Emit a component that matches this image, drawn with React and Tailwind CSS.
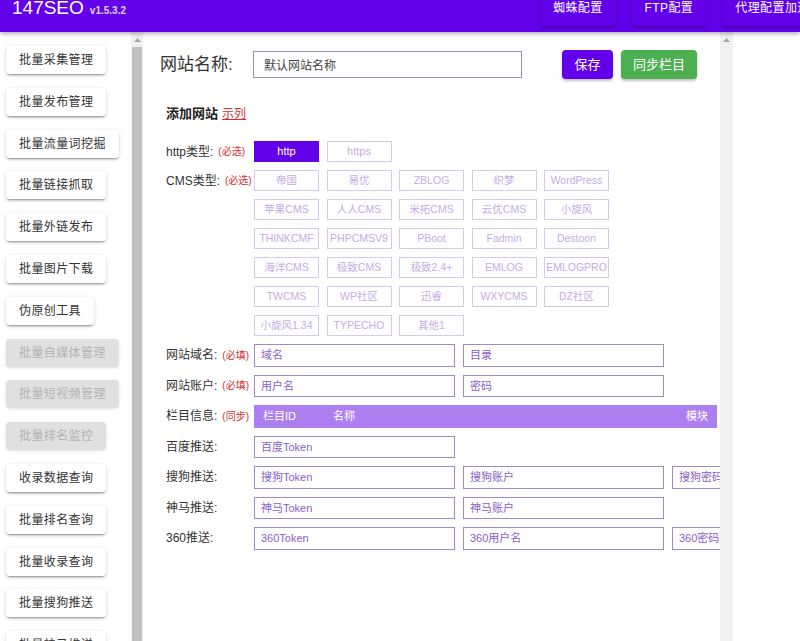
import React from 'react';

const sideItems = [
  { name: '批量采集管理' },
  { name: '批量发布管理' },
  { name: '批量流量词挖掘' },
  { name: '批量链接抓取' },
  { name: '批量外链发布' },
  { name: '批量图片下载' },
  { name: '伪原创工具' },
  { name: '批量自媒体管理', disabled: true },
  { name: '批量短视频管理', disabled: true },
  { name: '批量排名监控', disabled: true },
  { name: '收录数据查询' },
  { name: '批量排名查询' },
  { name: '批量收录查询' },
  { name: '批量搜狗推送' },
  { name: '批量神马推送' },
];

const cmsList = [
  '帝国', '易优', 'ZBLOG', '织梦', 'WordPress',
  '苹果CMS', '人人CMS', '米拓CMS', '云优CMS', '小旋风',
  'THINKCMF', 'PHPCMSV9', 'PBoot', 'Fadmin', 'Destoon',
  '海洋CMS', '极致CMS', '极致2.4+', 'EMLOG', 'EMLOGPRO',
  'TWCMS', 'WP社区', '迅睿', 'WXYCMS', 'DZ社区',
  '小旋风1.34', 'TYPECHO', '其他1',
];

const fieldRows = [
  { label: '网站域名:', tag: '(必填)', inputs: ['域名', '目录'] },
  { label: '网站账户:', tag: '(必填)', inputs: ['用户名', '密码'] },
  { label: '栏目信息:', tag: '(同步)', bar: true },
  { label: '百度推送:', inputs: ['百度Token'] },
  { label: '搜狗推送:', inputs: ['搜狗Token', '搜狗账户', '搜狗密码'] },
  { label: '神马推送:', inputs: ['神马Token', '神马账户'] },
  { label: '360推送:', inputs: ['360Token', '360用户名', '360密码'] },
];

const Arrow = () => (
  <svg width="7" height="4" viewBox="0 0 7 4">
    <polygon points="3.5,0 7,4 0,4" fill="#a3a3a3" />
  </svg>
);

const Label = ({ text, tag }) => (
  <div className="w-[88px] shrink-0 h-full flex items-center whitespace-nowrap text-[12px] text-[#333]">
    <span>{text}</span>
    {tag && <span className="ml-[5px] text-[10px] text-[#d32f2f]">{tag}</span>}
  </div>
);

const App = () => {
  return (
    <div className="w-[800px] h-[641px] overflow-hidden bg-white flex flex-col font-[family-name:Liberation_Sans,Noto_Sans_CJK_SC,sans-serif]">
      {/* header */}
      <header className="relative z-10 h-[32px] shrink-0 bg-[#6200ea] flex overflow-hidden whitespace-nowrap shadow-[0_2px_4px_rgba(0,0,0,0.3)]">
        <div className="w-[540px] shrink-0 flex items-baseline pl-[12px] -mt-[2px]">
          <span className="text-[19px] leading-[19px] text-white">147SEO</span>
          <span className="ml-[6px] text-[10px] font-semibold text-white/80">v1.5.3.2</span>
        </div>
        <div className="flex gap-[16px] shrink-0">
          {['蜘蛛配置', 'FTP配置', '代理配置加速'].map(t => (
            <div
              key={t}
              className="h-[36px] -mt-[10px] px-[13px] flex items-center rounded-[4px] bg-[#6200ea] text-white text-[12px] tracking-[0.4px] shadow-[0_2px_3px_rgba(0,0,0,0.3)]"
            >
              {t}
            </div>
          ))}
        </div>
      </header>

      <div className="flex flex-1 min-h-0">
        {/* sidebar */}
        <aside className="w-[131px] shrink-0 overflow-hidden pt-[14px] flex flex-col items-start gap-[13.8px]">
          {sideItems.map(item => (
            <button
              key={item.name}
              className={
                item.disabled
                  ? 'ml-[6px] h-[28px] shrink-0 px-[13px] rounded-[4px] text-[12px] tracking-[0.4px] whitespace-nowrap bg-[#e0e0e0] text-[#b3b3b3] shadow-[0_1px_3px_rgba(0,0,0,0.12)]'
                  : 'ml-[6px] h-[28px] shrink-0 px-[13px] rounded-[4px] text-[12px] tracking-[0.4px] whitespace-nowrap bg-white text-[#333] shadow-[0_3px_1px_-2px_rgba(0,0,0,0.2),0_2px_2px_0_rgba(0,0,0,0.14),0_1px_5px_0_rgba(0,0,0,0.12)]'
              }
            >
              {item.name}
            </button>
          ))}
        </aside>

        {/* sidebar scrollbar */}
        <div className="w-[12px] shrink-0 bg-[#f1f1f1] flex flex-col">
          <div className="h-[15px] flex items-center justify-center">
            <Arrow />
          </div>
          <div className="flex-1 bg-[#c1c1c1] mx-[1px]" />
        </div>

        {/* main */}
        <main className="w-[577px] shrink-0 overflow-hidden pl-[17px] pt-[18px]">
          <div className="flex items-center">
            <div className="w-[93px] shrink-0 text-[17px] text-[#333]">网站名称:</div>
            <input
              defaultValue="默认网站名称"
              className="w-[269px] h-[27px] shrink-0 border border-[#a08bc6] px-[10px] text-[12px] text-[#444] outline-none"
            />
            <button className="ml-[40px] w-[51px] h-[29px] rounded-[4px] bg-[#6200ea] text-white text-[13px] shadow-[0_2px_3px_rgba(0,0,0,0.25)]">
              保存
            </button>
            <button className="ml-[8px] w-[76px] h-[29px] rounded-[4px] bg-[#4caf50] text-white text-[13px] shadow-[0_2px_3px_rgba(0,0,0,0.25)]">
              同步栏目
            </button>
          </div>

          <div className="pl-[6px]">
            <div className="mt-[25px] h-[20px] flex items-center">
              <span className="text-[13px] font-bold text-[#222]">添加网站</span>
              <span className="ml-[4px] text-[12px] text-[#d32f2f] underline">示列</span>
            </div>

            <div className="mt-[17px] flex flex-col gap-[8px]">
              <div className="flex h-[21px]">
                <Label text="http类型:" tag="(必选)" />
                <div className="flex gap-[7.5px]">
                  <div className="w-[65px] h-[21px] flex items-center justify-center bg-[#6200ea] text-white text-[11px]">http</div>
                  <div className="w-[65px] h-[21px] flex items-center justify-center border border-[#d7c9ee] text-[#c4ace6] text-[11px]">https</div>
                </div>
              </div>

              <div className="flex items-start">
                <div className="h-[21px]">
                  <Label text="CMS类型:" tag="(必选)" />
                </div>
                <div className="grid grid-cols-[repeat(5,65px)] gap-x-[7.5px] gap-y-[8px]">
                  {cmsList.map(c => (
                    <div
                      key={c}
                      className="h-[21px] flex items-center justify-center border border-[#d7c9ee] text-[#c4ace6] text-[10.5px] whitespace-nowrap"
                    >
                      {c}
                    </div>
                  ))}
                </div>
              </div>

              {fieldRows.map(row => (
                <div key={row.label} className="flex h-[22.5px]">
                  <Label text={row.label} tag={row.tag} />
                  {row.bar ? (
                    <div className="w-[463px] shrink-0 h-full bg-[#ae7ff1] flex items-center px-[9px] text-[11px] text-white">
                      <span className="w-[70px]">栏目ID</span>
                      <span>名称</span>
                      <span className="ml-auto">模块</span>
                    </div>
                  ) : (
                    <div className="flex gap-[8px]">
                      {row.inputs.map(p => (
                        <input
                          key={p}
                          placeholder={p}
                          className="w-[201px] h-[22.5px] shrink-0 border border-[#a08bc6] px-[6px] text-[11px] outline-none placeholder:text-[#8a5fc7]"
                        />
                      ))}
                    </div>
                  )}
                </div>
              ))}
            </div>
          </div>
        </main>

        {/* main scrollbar */}
        <div className="w-[13px] shrink-0 bg-[#f1f1f1] flex flex-col">
          <div className="h-[15px] flex items-center justify-center">
            <Arrow />
          </div>
        </div>

        <div className="flex-1 bg-white" />
      </div>
    </div>
  );
};

export default App;
